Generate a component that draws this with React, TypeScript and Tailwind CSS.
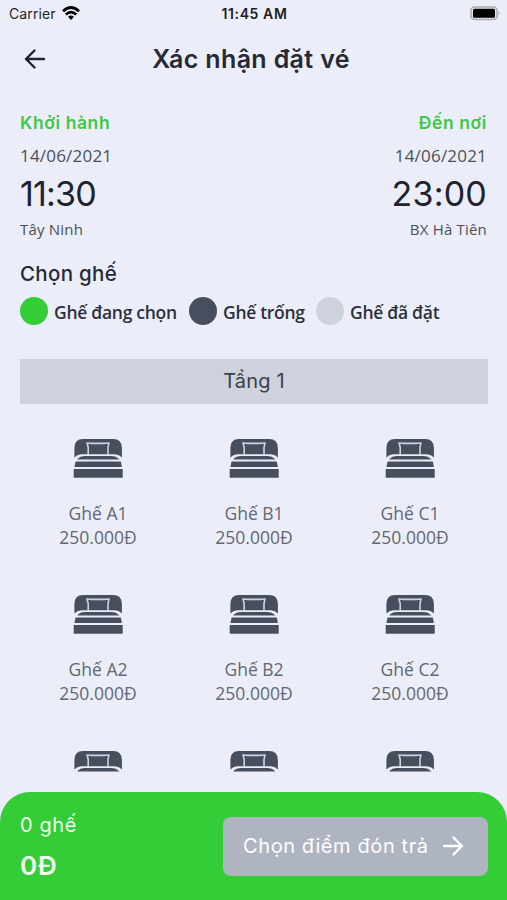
import React from "react";

interface SeatProps {
  name: string;
  price: string;
}

interface StopProps {
  title: string;
  date: string;
  time: string;
  place: string;
  timeClass: string;
  end?: boolean;
}

const rows = [1, 2];
const columns = ["A", "B", "C"];

const legends = [
  { label: "Ghế đang chọn", color: "bg-[#34cd38]", width: "w-[123px]", gap: "mr-3" },
  { label: "Ghế trống", color: "bg-[#474f5e]", width: "w-[82px]", gap: "mr-[11px]" },
  { label: "Ghế đã đặt", color: "bg-[#ced2dc]", width: "w-[90px]", gap: "" },
];

const BedIcon = () => (
  <svg width="50" height="40" viewBox="0 0 50 40" className="block shrink-0">
    <g fill="#474f5e">
      <path d="M1.4 19.4V10Q1.4 .9 10 .9H40.2Q48.9 .9 48.9 10V19.4Q46.5 16.5 42 16.2H8.2Q3.8 16.5 1.4 19.4Z" />
      <path d="M4 21.4Q7.2 18 12 18H38.3Q43.2 18 46.4 21.4Z" />
      <path d="M2.6 23.6H47.8L48.9 28.9H1.4Z" />
      <path d="M.7 31H49.7V39.7H.7Z" />
    </g>
    <path
      d="M15.2 16.8V9.5L14 5Q16 5.4 19 5.4H31Q34 5.4 36 5L35 9.5V16.8"
      fill="none"
      stroke="#cfd3de"
      strokeWidth="1.6"
      strokeLinejoin="round"
    />
  </svg>
);

const ArrowIcon = ({ className }: { className: string }) => (
  <svg width="22" height="22" viewBox="0 0 22 22" fill="none" className={className}>
    <path
      d="M2 11H20M11.5 2.5L20 11L11.5 19.5"
      stroke="currentColor"
      strokeWidth="2.4"
      strokeLinecap="round"
      strokeLinejoin="round"
    />
  </svg>
);

const StatusBar = () => (
  <div className="grid h-7 grid-cols-3 items-center pl-[9px] pr-[7px] text-black">
    <div className="flex items-center gap-[6px]">
      <span className="-mt-px text-[14px] tracking-[0.1px] text-[#25262b]">Carrier</span>
      <svg width="18" height="14" viewBox="0 0 18 14" className="-mt-[3px]">
        <g fill="none" stroke="#000" strokeWidth="2.8">
          <path d="M1 5.2Q9-2.2 17 5.2" />
          <path d="M3.8 8.6Q9 3.7 14.2 8.6" />
        </g>
        <path d="M6 10.8Q9 8.4 12 10.8L9 13.9Z" />
      </svg>
    </div>
    <span className="-mt-px text-center text-[14px] font-semibold tracking-[0.6px] text-[#202126]">11:45 AM</span>
    <svg width="31" height="15" viewBox="0 0 31 15" className="-mt-[2px] justify-self-end">
      <rect x="2" y="1" width="26" height="12.6" rx="3.5" fill="#e4e6ec" stroke="#a9abb0" strokeWidth="1.5" />
      <rect x="4" y="2.8" width="22" height="9" rx="1.5" />
      <path d="M29.4 5Q31.4 7.3 29.4 9.6Z" fill="#a9abb0" />
    </svg>
  </div>
);

const Stop: React.FC<StopProps> = ({ title, date, time, place, timeClass, end }) => (
  <div className={end ? "flex flex-col items-end" : "flex flex-col items-start"}>
    <p className="text-[17.5px] leading-6 font-semibold tracking-[0.6px] text-[#3fc745]">{title}</p>
    <p className="mt-[9px] font-['Open_Sans'] text-[17px] leading-6 tracking-[0.2px] text-[#4b4f5c]">{date}</p>
    <p className={`mt-[6px] text-[34px] leading-[40px] text-[#20222e] ${timeClass}`}>{time}</p>
    <p className="mt-[5px] font-['Open_Sans'] text-[15px] leading-5 tracking-[0.2px] text-[#4b4f5c]">{place}</p>
  </div>
);

const Seat: React.FC<SeatProps> = ({ name, price }) => (
  <div className="flex h-[156px] flex-col items-center font-['Open_Sans'] text-[17.5px] leading-[23.5px] text-[#636774]">
    <BedIcon />
    <p className="mt-[24px]">{name}</p>
    <p>{price}</p>
  </div>
);

const App: React.FC = () => {
  return (
    <div className="flex h-[900px] w-[507px] flex-col overflow-hidden bg-[#ebeef9] font-['Inter',sans-serif]">
      <StatusBar />
      <header className="grid h-[62px] grid-cols-[1fr_auto_1fr] items-center px-6">
        <ArrowIcon className="rotate-180 text-[#20222e]" />
        <h1 className="mr-[5px] mt-[2px] text-[25px] font-semibold tracking-[0.35px] text-[#272935]">Xác nhận đặt vé</h1>
      </header>

      <section className="mt-[21px] flex justify-between px-5">
        <Stop title="Khởi hành" date="14/06/2021" time="11:30" place="Tây Ninh" timeClass="tracking-[-0.8px]" />
        <Stop title="Đến nơi" date="14/06/2021" time="23:00" place="BX Hà Tiên" timeClass="tracking-[0.2px]" end />
      </section>

      <section className="mt-[21px] px-5">
        <h2 className="text-[20.5px] leading-7 font-medium tracking-[0.3px] text-[#272935]">Chọn ghế</h2>
        <div className="mt-[9px] flex h-7 items-center">
          {legends.map((item) => (
            <div key={item.label} className={`flex items-center ${item.gap}`}>
              <span className={`mr-[6px] size-7 rounded-full ${item.color}`} />
              <span
                className={`mt-px font-['Open_Sans'] text-[17.5px] leading-7 font-semibold tracking-[-0.3px] whitespace-nowrap text-[#2d303c] ${item.width}`}
              >
                {item.label}
              </span>
            </div>
          ))}
        </div>
      </section>

      <section className="mt-[34px] flex h-[413px] flex-col overflow-hidden px-5">
        <h3 className="h-[45px] w-[468px] shrink-0 bg-[#ced2dc] text-center text-[20px] leading-[45px] tracking-[0.2px] text-[#3b3f4b]">
          Tầng 1
        </h3>
        <div className="mt-[34px] grid w-[468px] shrink-0 grid-cols-3">
          {rows.map((row) =>
            columns.map((column) => (
              <Seat key={column + row} name={`Ghế ${column}${row}`} price="250.000Đ" />
            ))
          )}
        </div>
        <div className="grid h-[22px] w-[468px] shrink-0 grid-cols-3 justify-items-center overflow-hidden">
          {columns.map((column) => (
            <BedIcon key={column} />
          ))}
        </div>
      </section>

      <footer className="mt-auto flex h-[108px] shrink-0 items-center justify-between rounded-t-[30px] bg-[#34cd38] pr-[19px] pl-5 text-[#f0fff0]">
        <div>
          <p className="mt-[2px] text-[20px] leading-6 tracking-[0.6px]">0 ghế</p>
          <p className="mt-[13px] text-[26px] leading-8 font-semibold tracking-[0.8px]">0Đ</p>
        </div>
        <button className="flex h-[59px] w-[265px] items-center justify-between rounded-lg bg-[#afb4c1] pr-6 pl-5 text-[20px] text-white">
          <span className="tracking-[0.6px] whitespace-nowrap">Chọn điểm đón trả</span>
          <ArrowIcon className="shrink-0 text-white" />
        </button>
      </footer>
    </div>
  );
};

export default App;
